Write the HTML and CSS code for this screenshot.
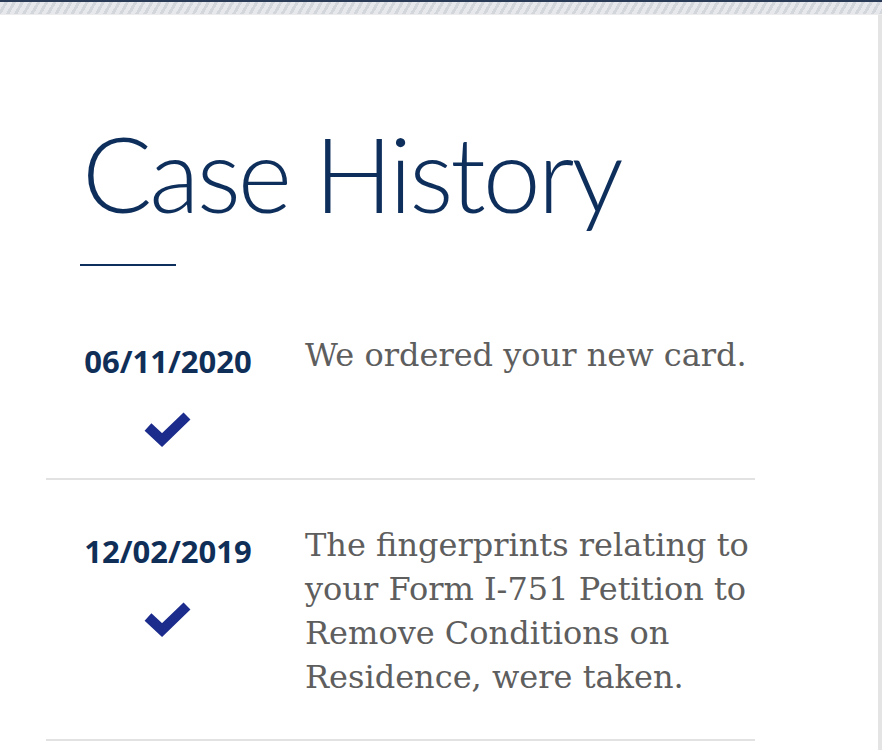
FILE: index.html
```html
<!DOCTYPE html>
<html lang="en">
<head>
<meta charset="utf-8">
<title>Case History</title>
<link rel="stylesheet" href="styles.css">
</head>
<body>
<div class="topbar"></div>
<div class="page">
  <div class="content">
    <h1 class="title">Case History</h1>
    <div class="rule"></div>
    <ul class="history">
      <li class="entry">
        <div class="when">
          <div class="date">06/11/2020</div>
          <svg class="check" viewBox="0 0 50 40" width="50" height="40" aria-hidden="true"><polyline points="5,19 19,32 44,8" fill="none" stroke="#1c2c8c" stroke-width="10" stroke-linejoin="miter" stroke-linecap="butt"/></svg>
        </div>
        <p class="desc">We ordered your new card.</p>
      </li>
      <li class="entry">
        <div class="when">
          <div class="date">12/02/2019</div>
          <svg class="check" viewBox="0 0 50 40" width="50" height="40" aria-hidden="true"><polyline points="5,19 19,32 44,8" fill="none" stroke="#1c2c8c" stroke-width="10" stroke-linejoin="miter" stroke-linecap="butt"/></svg>
        </div>
        <p class="desc">The fingerprints relating to your Form I-751 Petition to Remove Conditions on Residence, were taken.</p>
      </li>
    </ul>
  </div>
</div>
</body>
</html>
```
FILE: styles.css
```css
html, body {
  margin: 0;
  padding: 0;
  background: #ffffff;
}
body {
  height: 750px;
  overflow: hidden;
  display: flex;
  flex-direction: column;
}
.topbar {
  height: 12px;
  border-top: 2px solid #2a3b57;
  background: repeating-linear-gradient(120deg, #e6e8ec 0px, #e6e8ec 4px, #d3d6db 4px, #d3d6db 7px);
  border-bottom: 1px solid #ececec;
}
.page {
  flex: 1;
  border-right: 4px solid #e4e4e4;
}
.content {
  padding-left: 46px;
  width: 709px;
}
.title {
  margin: 0;
  padding: 98px 0 0 36px;
  font-family: "Lato", sans-serif;
  font-weight: 300;
  font-size: 104px;
  line-height: 120px;
  color: #0e2f5c;
  letter-spacing: -3px;
}
.rule {
  margin: 31px 0 0 34px;
  width: 96px;
  height: 2px;
  background: #0e2f5c;
}
.history {
  list-style: none;
  margin: 67px 0 0 0;
  padding: 0;
}
.entry {
  display: flex;
  gap: 15px;
  border-bottom: 2px solid #e2e2e2;
  padding-bottom: 30px;
}
.entry + .entry {
  padding-top: 43px;
  padding-bottom: 40px;
}
.when {
  width: 244px;
  flex: none;
  display: flex;
  flex-direction: column;
  align-items: center;
}
.date {
  margin-top: 8px;
  font-family: "Open Sans", sans-serif;
  font-weight: 700;
  font-size: 31px;
  line-height: 40px;
  color: #102f58;
  white-space: nowrap;
}
.check {
  margin-top: 27px;
  display: block;
}
.desc {
  margin: 0;
  flex: 1;
  font-family: "DejaVu Serif", serif;
  font-size: 32px;
  line-height: 44px;
  color: #5e5e5e;
}
```
